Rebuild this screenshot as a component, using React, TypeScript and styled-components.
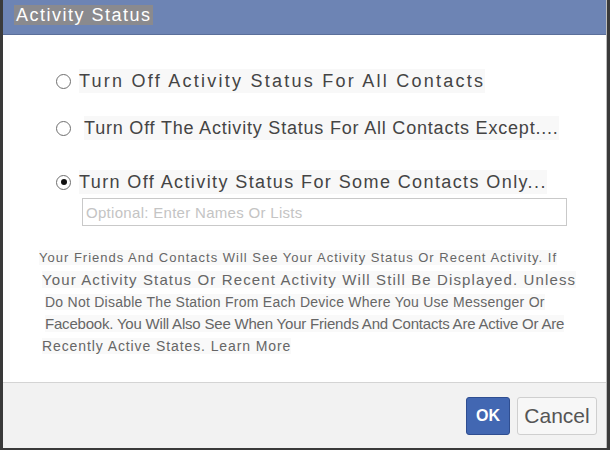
import React from "react";
import styled, { createGlobalStyle } from "styled-components";

const Global = createGlobalStyle`
  html, body { margin: 0; padding: 0; background: #3c3c3c; }
  body { font-family: "Liberation Sans", Arial, sans-serif; }
`;

const Frame = styled.div`
  width: 610px;
  height: 450px;
  box-sizing: border-box;
  padding: 0 3px 2px 3px;
  background: #3a3a3a;
  display: flex;
`;

const Dialog = styled.div`
  flex: 1;
  display: flex;
  flex-direction: column;
  background: #fff;
  border-right: 1px solid #bdbdbd;
`;

const Header = styled.div`
  height: 35px;
  box-sizing: border-box;
  background: #6d84b4;
  border-bottom: 1px solid #5b6f9a;
  padding: 5px 0 0 11px;
  display: flex;
  align-items: flex-start;
`;

const Title = styled.span`
  background: #8a8a8e;
  color: #fff;
  font-size: 18px;
  letter-spacing: 1.5px;
  line-height: 20px;
  padding: 0 1px 0 2px;
`;

const Body = styled.div`
  flex: 1;
  display: flex;
  flex-direction: column;
  padding: 34px 0 0 0;
`;

const Option = styled.label<{ $indent: number; $gap: number; $spacing: number; $mt: number }>`
  display: flex;
  align-items: center;
  margin-top: ${(p) => p.$mt}px;
  padding-left: ${(p) => p.$indent}px;
  gap: ${(p) => p.$gap}px;
  font-size: 18px;
  line-height: 24px;
  color: #444;
  letter-spacing: ${(p) => p.$spacing}px;
`;

const Radio = styled.span<{ $checked?: boolean }>`
  width: 13px;
  height: 13px;
  border-radius: 50%;
  border: 1.5px solid #6f6f6f;
  background: #fff;
  display: flex;
  align-items: center;
  justify-content: center;
  flex: none;
  &::after {
    content: "";
    width: 6px;
    height: 6px;
    border-radius: 50%;
    background: ${(p) => (p.$checked ? "#111" : "transparent")};
  }
`;

const OptionText = styled.span`
  background: #f8f8f8;
  white-space: nowrap;
`;

const Input = styled.div`
  margin: 4px 0 0 79px;
  width: 485px;
  height: 28px;
  box-sizing: border-box;
  border: 1px solid #c9c9c9;
  padding: 4px 0 0 3px;
  font-size: 15px;
  line-height: 20px;
  color: #c4c4c4;
  letter-spacing: 0.3px;
`;

const Paragraph = styled.div`
  margin-top: 21px;
  display: flex;
  flex-direction: column;
  color: #666;
`;

const Line = styled.div<{ $size: number; $spacing: number; $indent: number }>`
  height: 22px;
  line-height: 22px;
  padding-left: ${(p) => p.$indent}px;
  font-size: ${(p) => p.$size}px;
  letter-spacing: ${(p) => p.$spacing}px;
  white-space: nowrap;
`;

const LineText = styled.span`
  background: #f9f9f9;
`;

const Footer = styled.div`
  height: 66px;
  box-sizing: border-box;
  background: #f2f2f2;
  border-top: 1px solid #d4d4d4;
  display: flex;
  justify-content: flex-end;
  align-items: center;
  gap: 7px;
  padding: 0 9px 0 0;
`;

const OkButton = styled.button`
  width: 44px;
  height: 38px;
  border: 1px solid #2f4e91;
  border-radius: 3px;
  background: #4267b2;
  color: #fff;
  font-family: "Liberation Sans", Arial, sans-serif;
  font-weight: bold;
  font-size: 16px;
  padding: 0;
`;

const CancelButton = styled.button`
  width: 80px;
  height: 38px;
  border: 1px solid #cfcfcf;
  border-radius: 3px;
  background: #f7f7f7;
  color: #555;
  font-family: "Liberation Sans", Arial, sans-serif;
  font-size: 21px;
  padding: 0;
`;

const lines = [
  { t: "Your Friends And Contacts Will See Your Activity Status Or Recent Activity. If", s: 13, ls: 1.0, i: 36 },
  { t: "Your Activity Status Or Recent Activity Will Still Be Displayed. Unless", s: 15, ls: 1.12, i: 39 },
  { t: "Do Not Disable The Station From Each Device Where You Use Messenger Or", s: 14, ls: 0.25, i: 42 },
  { t: "Facebook. You Will Also See When Your Friends And Contacts Are Active Or Are", s: 15, ls: -0.2, i: 42 },
  { t: "Recently Active States. Learn More", s: 14, ls: 0.9, i: 39 },
];

export default function App() {
  return (
    <>
      <Global />
      <Frame>
        <Dialog>
          <Header>
            <Title>Activity Status</Title>
          </Header>
          <Body>
            <Option $indent={53} $gap={8} $spacing={2.25} $mt={0}>
              <Radio />
              <OptionText>Turn Off Activity Status For All Contacts</OptionText>
            </Option>
            <Option $indent={53} $gap={13} $spacing={0.8} $mt={23}>
              <Radio />
              <OptionText>Turn Off The Activity Status For All Contacts Except....</OptionText>
            </Option>
            <Option $indent={53} $gap={8} $spacing={1.4} $mt={30}>
              <Radio $checked />
              <OptionText>Turn Off Activity Status For Some Contacts Only...</OptionText>
            </Option>
            <Input>Optional: Enter Names Or Lists</Input>
            <Paragraph>
              {lines.map((l) => (
                <Line key={l.t} $size={l.s} $spacing={l.ls} $indent={l.i}>
                  <LineText>{l.t}</LineText>
                </Line>
              ))}
            </Paragraph>
          </Body>
          <Footer>
            <OkButton>OK</OkButton>
            <CancelButton>Cancel</CancelButton>
          </Footer>
        </Dialog>
      </Frame>
    </>
  );
}
